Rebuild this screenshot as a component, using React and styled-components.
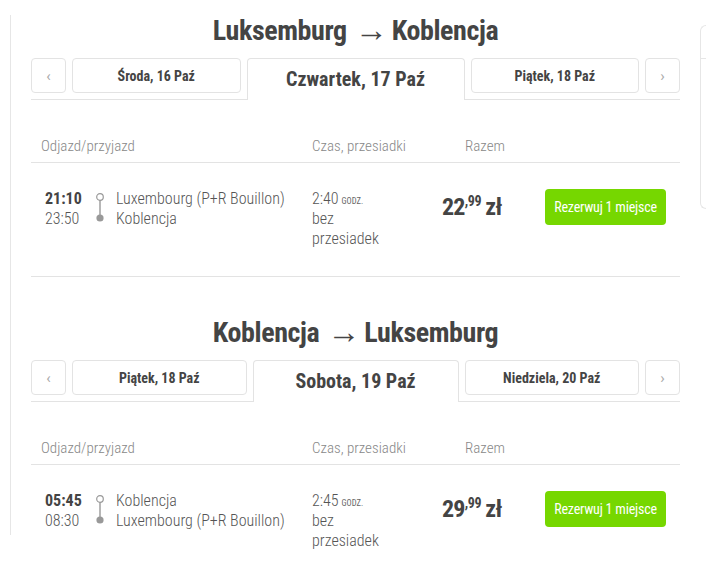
import React from "react";
import styled, { createGlobalStyle } from "styled-components";

const Global = createGlobalStyle`
  html, body { margin: 0; padding: 0; background: #fff; }
  body { font-family: "Roboto", "Liberation Sans", sans-serif; color: #444; min-height: 564px; }
  * { box-sizing: border-box; }
`;

const Page = styled.div`
  display: flex;
  align-items: flex-start;
  padding-top: 15px;
  width: 706px;
  min-height: 564px;
  overflow: hidden;
`;

const Main = styled.div`
  position: relative;
  flex: 0 0 auto;
  margin-left: 10px;
  width: 690px;
  padding: 0 20px 0 21px;

  &::before {
    content: "";
    position: absolute;
    left: 0;
    top: 0;
    width: 1px;
    height: 520px;
    background: #e6e6e6;
  }
`;

const Aside = styled.div`
  flex: 1 1 auto;
  min-width: 0;
  margin-top: 10px;
  height: 184px;
  border: 1px solid #e6e6e6;
  border-right: none;
  border-radius: 6px 0 0 6px;
`;

const AsideHead = styled.div`
  height: 33px;
  border-bottom: 1px solid #e6e6e6;
`;

const Section = styled.section`
  & + & { margin-top: 40px; }
`;

const Title = styled.h2`
  margin: 0;
  height: 32px;
  text-align: center;
  font-size: 28px;
  line-height: 32px;
  font-weight: 700;
  font-stretch: condensed;
  letter-spacing: -0.4px;
  color: #444;
`;

const Arrow = styled.span`
  font-size: 33px;
  line-height: 0;
  font-weight: 300;
  font-stretch: normal;
  margin: 0 4px 0 8px;
  letter-spacing: 0;
  vertical-align: -1px;
`;

const Tabs = styled.div`
  margin-top: 11px;
  display: flex;
  align-items: flex-start;
  gap: 6px;
  border-bottom: 1px solid #e3e3e3;
`;

const NavBtn = styled.button`
  flex: 0 0 35px;
  height: 35px;
  border: 1px solid #e3e3e3;
  border-radius: 4px;
  background: #fff;
  color: #aaa;
  font-family: "Roboto", sans-serif;
  font-size: 15px;
  padding: 0;
  display: flex;
  align-items: center;
  justify-content: center;
`;

const Tab = styled.div`
  flex: 1 1 0;
  height: 35px;
  border: 1px solid #e3e3e3;
  border-radius: 4px;
  display: flex;
  align-items: center;
  justify-content: center;
  font-size: 14px;
  font-weight: 700;
  font-stretch: condensed;
  color: #444;
`;

const ActiveTab = styled.div`
  flex: 0 0 ${(p) => p.$width}px;
  height: 42px;
  margin-bottom: -1px;
  background: #fff;
  border: 1px solid #e3e3e3;
  border-bottom: none;
  border-radius: 4px 4px 0 0;
  display: flex;
  align-items: center;
  justify-content: center;
  padding-bottom: 1px;
  font-size: 20px;
  font-weight: 700;
  font-stretch: condensed;
  color: #444;
`;

const Header = styled.div`
  margin-top: 36px;
  display: flex;
  padding: 0 0 6px 10px;
  border-bottom: 1px solid #e3e3e3;
  font-size: 15px;
  line-height: 20px;
  font-weight: 300;
  font-stretch: condensed;
  color: #888;
`;

const HeadCell = styled.div`
  flex: 0 0 ${(p) => (p.$w ? `${p.$w}px` : "auto")};
`;

const Row = styled.div`
  display: flex;
  align-items: flex-start;
  padding: 26px 0 27px 14px;
  border-bottom: 1px solid ${(p) => (p.$last ? "transparent" : "#e3e3e3")};
  font-size: 16px;
  line-height: 20px;
  font-weight: 300;
  font-stretch: condensed;
  color: #555;
`;

const Times = styled.div`
  flex: 0 0 47px;
  display: flex;
  flex-direction: column;
`;

const Time = styled.span`
  font-weight: ${(p) => (p.$bold ? 700 : 300)};
  color: ${(p) => (p.$bold ? "#444" : "#555")};
`;

const RouteIcon = styled.svg`
  flex: 0 0 16px;
  display: block;
`;

const Stations = styled.div`
  flex: 0 0 196px;
  margin-left: 8px;
  display: flex;
  flex-direction: column;
`;

const Duration = styled.div`
  flex: 0 0 130px;
  display: flex;
  flex-direction: column;
`;

const Godz = styled.span`
  font-size: 8.5px;
  line-height: 0;
  font-weight: 400;
  text-transform: uppercase;
  margin-left: 3px;
  color: #666;
`;

const Price = styled.div`
  flex: 0 0 103px;
  font-size: 24px;
  line-height: 36px;
  font-weight: 700;
  font-stretch: condensed;
  letter-spacing: -0.8px;
  color: #444;
  white-space: nowrap;
`;

const Cents = styled.sup`
  font-size: 14px;
  vertical-align: 9px;
  line-height: 0;
  margin-right: 4px;
  letter-spacing: -0.3px;
`;

const BookBtn = styled.button`
  flex: 0 0 auto;
  width: 121px;
  height: 36px;
  border: none;
  border-radius: 4px;
  background: #76d700;
  color: #fff;
  font-family: "Roboto", sans-serif;
  font-size: 14px;
  font-weight: 400;
  font-stretch: condensed;
  letter-spacing: -0.2px;
  padding: 0;
`;

const Route = () => (
  <RouteIcon width="16" height="40" viewBox="0 0 16 40">
    <circle cx="8" cy="8" r="3.3" fill="#fff" stroke="#999" strokeWidth="1.2" />
    <line x1="8" y1="11.3" x2="8" y2="26" stroke="#999" strokeWidth="1.4" />
    <circle cx="8" cy="29" r="3.6" fill="#999" />
  </RouteIcon>
);

const trips = [
  {
    from: "Luksemburg",
    to: "Koblencja",
    prev: "Środa, 16 Paź",
    active: "Czwartek, 17 Paź",
    activeW: 218,
    next: "Piątek, 18 Paź",
    dep: "21:10",
    arr: "23:50",
    st1: "Luxembourg (P+R Bouillon)",
    st2: "Koblencja",
    dur: "2:40",
    price: "22",
    cents: "99",
  },
  {
    from: "Koblencja",
    to: "Luksemburg",
    prev: "Piątek, 18 Paź",
    active: "Sobota, 19 Paź",
    activeW: 206,
    next: "Niedziela, 20 Paź",
    dep: "05:45",
    arr: "08:30",
    st1: "Koblencja",
    st2: "Luxembourg (P+R Bouillon)",
    dur: "2:45",
    price: "29",
    cents: "99",
    last: true,
  },
];

export default function App() {
  return (
    <>
      <Global />
      <Page>
        <Main>
          {trips.map((t) => (
            <Section key={t.from}>
              <Title>
                {t.from}
                <Arrow>→</Arrow>
                {t.to}
              </Title>
              <Tabs>
                <NavBtn>‹</NavBtn>
                <Tab>{t.prev}</Tab>
                <ActiveTab $width={t.activeW}>{t.active}</ActiveTab>
                <Tab>{t.next}</Tab>
                <NavBtn>›</NavBtn>
              </Tabs>
              <Header>
                <HeadCell $w={271}>Odjazd/przyjazd</HeadCell>
                <HeadCell $w={153}>Czas, przesiadki</HeadCell>
                <HeadCell>Razem</HeadCell>
              </Header>
              <Row $last={t.last}>
                <Times>
                  <Time $bold>{t.dep}</Time>
                  <Time>{t.arr}</Time>
                </Times>
                <Route />
                <Stations>
                  <span>{t.st1}</span>
                  <span>{t.st2}</span>
                </Stations>
                <Duration>
                  <span>
                    {t.dur}
                    <Godz>godz.</Godz>
                  </span>
                  <span>bez</span>
                  <span>przesiadek</span>
                </Duration>
                <Price>
                  {t.price}
                  <Cents>,{t.cents}</Cents>zł
                </Price>
                <BookBtn>Rezerwuj 1 miejsce</BookBtn>
              </Row>
            </Section>
          ))}
        </Main>
        <Aside>
          <AsideHead />
        </Aside>
      </Page>
    </>
  );
}
